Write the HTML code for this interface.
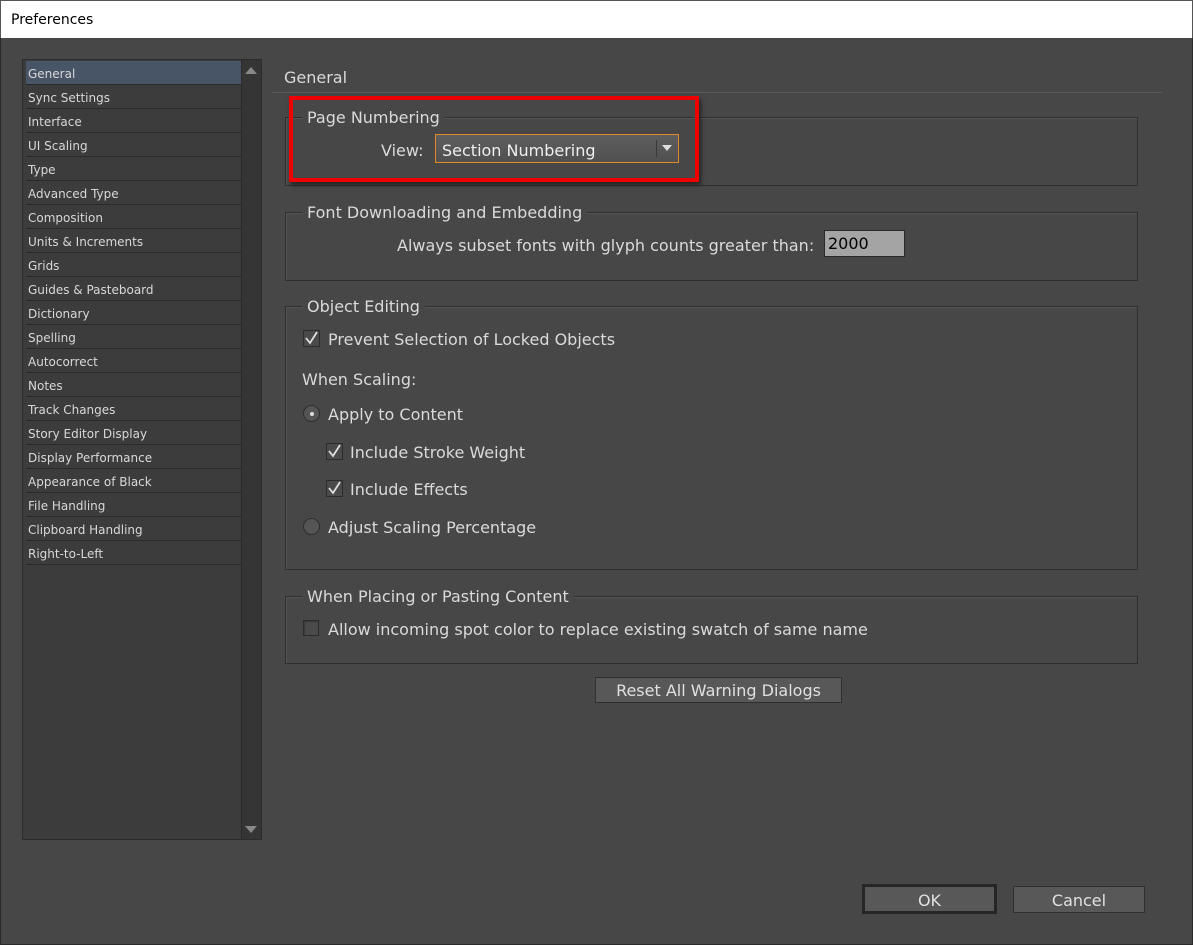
<!DOCTYPE html>
<html><head><style>
*{margin:0;padding:0;box-sizing:border-box}
body{width:1193px;height:945px;background:#474747;font-family:"DejaVu Sans","Liberation Sans",sans-serif;color:#dcdcdc;position:relative;overflow:hidden}
.a{position:absolute}
.title{left:0;top:0;width:1193px;height:38px;background:#fff;color:#000;font-size:14px;padding:11px 10px;border:1px solid #555;border-bottom:none}
.frame{left:0;top:38px;width:1193px;height:907px;border:1px solid #2a2a2a;border-top:none}
.list{left:22px;top:59px;width:240px;height:781px;background:#3c3c3c;border:1px solid #2c2c2c}
.item{position:absolute;left:3px;width:215px;height:24px;border-bottom:1px solid #2a2a2a;font-size:12px;padding:6px 2px;color:#d8d8d8}
.sel{background:#485567}
.sb{left:241px;top:60px;width:20px;height:779px;background:#353535;border-left:1px solid #2a2a2a}
.grp{position:absolute;left:285px;width:853px;border:1px solid #2e2e2e;box-shadow:inset 1px 1px 0 #555}
.leg{position:absolute;left:16px;top:-10px;background:#474747;padding:0 5px;font-size:16px;color:#dadada}
.t{position:absolute;font-size:16px;color:#dadada;white-space:nowrap}
.cb{position:absolute;width:16px;height:16px;background:#4a4a4a;border:1px solid #2c2c2c;box-shadow:inset 1px 1px 1px #3a3a3a}
.rd{position:absolute;width:17px;height:17px;border-radius:50%;background:#555;border:1px solid #2e2e2e}
.btn{position:absolute;background:#585858;border:1px solid #303030;font-size:16px;text-align:center;color:#e0e0e0}
</style></head><body>
<div class="a title">Preferences</div>
<div class="a frame"></div>
<div class="a list">
<div class="item sel" style="top:1px">General</div>
<div class="item" style="top:25px">Sync Settings</div>
<div class="item" style="top:49px">Interface</div>
<div class="item" style="top:73px">UI Scaling</div>
<div class="item" style="top:97px">Type</div>
<div class="item" style="top:121px">Advanced Type</div>
<div class="item" style="top:145px">Composition</div>
<div class="item" style="top:169px">Units &amp; Increments</div>
<div class="item" style="top:193px">Grids</div>
<div class="item" style="top:217px">Guides &amp; Pasteboard</div>
<div class="item" style="top:241px">Dictionary</div>
<div class="item" style="top:265px">Spelling</div>
<div class="item" style="top:289px">Autocorrect</div>
<div class="item" style="top:313px">Notes</div>
<div class="item" style="top:337px">Track Changes</div>
<div class="item" style="top:361px">Story Editor Display</div>
<div class="item" style="top:385px">Display Performance</div>
<div class="item" style="top:409px">Appearance of Black</div>
<div class="item" style="top:433px">File Handling</div>
<div class="item" style="top:457px">Clipboard Handling</div>
<div class="item" style="top:481px">Right-to-Left</div>
</div>
<div class="a sb"></div>
<svg class="a" style="left:244px;top:66px" width="14" height="10"><path d="M1 8 L7 1 L13 8Z" fill="#888"/></svg>
<svg class="a" style="left:244px;top:824px" width="14" height="10"><path d="M1 2 L7 9 L13 2Z" fill="#888"/></svg>

<div class="t" style="left:284px;top:68px">General</div>
<div class="a" style="left:272px;top:92px;width:890px;height:1px;background:#5a5a5a"></div>

<div class="grp" style="top:117px;height:69px"><div class="leg">Page Numbering</div></div>
<div class="t" style="left:381px;top:141px">View:</div>
<div class="a" style="left:435px;top:134px;width:244px;height:29px;background:linear-gradient(#5e5e5e,#505050);border:1px solid #e08a2a"></div>
<div class="t" style="left:442px;top:141px;color:#eee">Section Numbering</div>
<div class="a" style="left:656px;top:140px;width:1px;height:17px;background:#3a3a3a"></div>
<svg class="a" style="left:661px;top:144px" width="12" height="9"><path d="M1 1 L11 1 L6 7Z" fill="#ddd"/></svg>
<div class="a" style="left:289px;top:96px;width:410px;height:86px;border:4px solid #ee0000;box-shadow:2px 3px 4px rgba(0,0,0,.5)"></div>

<div class="grp" style="top:212px;height:69px"><div class="leg">Font Downloading and Embedding</div></div>
<div class="t" style="left:397px;top:236px">Always subset fonts with glyph counts greater than:</div>
<div class="a" style="left:824px;top:230px;width:81px;height:27px;background:#a4a4a4;border:1px solid #2a2a2a;color:#000;font-size:16px;padding:3px 3px">2000</div>

<div class="grp" style="top:306px;height:264px"><div class="leg">Object Editing</div></div>
<svg class="a" style="left:303px;top:330px" width="17" height="17"><rect x="0.5" y="0.5" width="16" height="16" fill="#4a4a4a" stroke="#2c2c2c"/><path d="M3 8 L7 13 L14 2" fill="none" stroke="#e0e0e0" stroke-width="1.8"/></svg>
<div class="t" style="left:328px;top:330px">Prevent Selection of Locked Objects</div>
<div class="t" style="left:302px;top:370px">When Scaling:</div>
<div class="rd" style="left:303px;top:405px"></div><div class="a" style="left:310px;top:412px;width:4px;height:4px;border-radius:50%;background:#ddd"></div>
<div class="t" style="left:328px;top:405px">Apply to Content</div>
<svg class="a" style="left:326px;top:443px" width="17" height="17"><rect x="0.5" y="0.5" width="16" height="16" fill="#4a4a4a" stroke="#2c2c2c"/><path d="M3 8 L7 13 L14 2" fill="none" stroke="#e0e0e0" stroke-width="1.8"/></svg>
<div class="t" style="left:350px;top:443px">Include Stroke Weight</div>
<svg class="a" style="left:326px;top:480px" width="17" height="17"><rect x="0.5" y="0.5" width="16" height="16" fill="#4a4a4a" stroke="#2c2c2c"/><path d="M3 8 L7 13 L14 2" fill="none" stroke="#e0e0e0" stroke-width="1.8"/></svg>
<div class="t" style="left:350px;top:480px">Include Effects</div>
<div class="rd" style="left:303px;top:518px"></div>
<div class="t" style="left:328px;top:518px">Adjust Scaling Percentage</div>

<div class="grp" style="top:596px;height:68px"><div class="leg">When Placing or Pasting Content</div></div>
<div class="cb" style="left:303px;top:620px"></div>
<div class="t" style="left:328px;top:620px">Allow incoming spot color to replace existing swatch of same name</div>

<div class="btn" style="left:595px;top:677px;width:247px;height:26px;padding-top:3px">Reset All Warning Dialogs</div>
<div class="btn" style="left:862px;top:884px;width:135px;height:30px;border:3px solid #262626;padding-top:4px">OK</div>
<div class="btn" style="left:1013px;top:886px;width:132px;height:27px;padding-top:4px">Cancel</div>
</body></html>
